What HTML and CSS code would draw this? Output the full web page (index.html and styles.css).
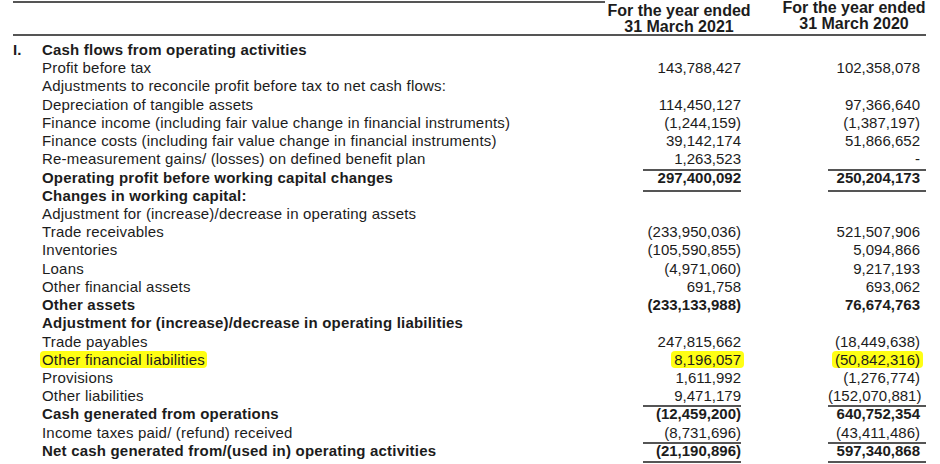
FILE: index.html
```html
<!DOCTYPE html>
<html>
<head>
<meta charset="utf-8">
<link rel="stylesheet" href="styles.css">
</head>
<body>
<div class="page">
  <div class="rule-top"></div>
  <div class="head">
    <div></div>
    <div class="hcell h1">For the year ended<br>31 March 2021</div>
    <div></div>
    <div class="hcell h2">For the year ended<br>31 March 2020</div>
  </div>
  <div class="rows">
    <div class="row b"><span class="no">I.</span><span class="lbl">Cash flows from operating activities</span><span class="n1"></span><span></span><span class="n2"></span></div>
    <div class="row"><span class="no"></span><span class="lbl">Profit before tax</span><span class="n1">143,788,427</span><span></span><span class="n2">102,358,078</span></div>
    <div class="row"><span class="no"></span><span class="lbl">Adjustments to reconcile profit before tax to net cash flows:</span><span class="n1"></span><span></span><span class="n2"></span></div>
    <div class="row"><span class="no"></span><span class="lbl">Depreciation of tangible assets</span><span class="n1">114,450,127</span><span></span><span class="n2">97,366,640</span></div>
    <div class="row"><span class="no"></span><span class="lbl">Finance income (including fair value change in financial instruments)</span><span class="n1">(1,244,159)</span><span></span><span class="n2">(1,387,197)</span></div>
    <div class="row"><span class="no"></span><span class="lbl">Finance costs (including fair value change in financial instruments)</span><span class="n1">39,142,174</span><span></span><span class="n2">51,866,652</span></div>
    <div class="row"><span class="no"></span><span class="lbl">Re-measurement gains/ (losses) on defined benefit plan</span><span class="n1">1,263,523</span><span></span><span class="n2">-</span></div>
    <div class="row b"><span class="no"></span><span class="lbl">Operating profit before working capital changes</span><span class="n1 over under4">297,400,092</span><span></span><span class="n2 over under4">250,204,173</span></div>
    <div class="row b"><span class="no"></span><span class="lbl">Changes in working capital:</span><span class="n1"></span><span></span><span class="n2"></span></div>
    <div class="row"><span class="no"></span><span class="lbl">Adjustment for (increase)/decrease in operating assets</span><span class="n1"></span><span></span><span class="n2"></span></div>
    <div class="row"><span class="no"></span><span class="lbl">Trade receivables</span><span class="n1">(233,950,036)</span><span></span><span class="n2">521,507,906</span></div>
    <div class="row"><span class="no"></span><span class="lbl">Inventories</span><span class="n1">(105,590,855)</span><span></span><span class="n2">5,094,866</span></div>
    <div class="row"><span class="no"></span><span class="lbl">Loans</span><span class="n1">(4,971,060)</span><span></span><span class="n2">9,217,193</span></div>
    <div class="row"><span class="no"></span><span class="lbl">Other financial assets</span><span class="n1">691,758</span><span></span><span class="n2">693,062</span></div>
    <div class="row b"><span class="no"></span><span class="lbl">Other assets</span><span class="n1">(233,133,988)</span><span></span><span class="n2">76,674,763</span></div>
    <div class="row b"><span class="no"></span><span class="lbl">Adjustment for (increase)/decrease in operating liabilities</span><span class="n1"></span><span></span><span class="n2"></span></div>
    <div class="row"><span class="no"></span><span class="lbl">Trade payables</span><span class="n1">247,815,662</span><span></span><span class="n2">(18,449,638)</span></div>
    <div class="row"><span class="no"></span><span class="lbl"><mark class="hl">Other financial liabilities</mark></span><span class="n1"><mark class="hl hn">8,196,057</mark></span><span></span><span class="n2"><mark class="hl hn">(50,842,316)</mark></span></div>
    <div class="row"><span class="no"></span><span class="lbl">Provisions</span><span class="n1">1,611,992</span><span></span><span class="n2">(1,276,774)</span></div>
    <div class="row"><span class="no"></span><span class="lbl">Other liabilities</span><span class="n1">9,471,179</span><span></span><span class="n2">(152,070,881)</span></div>
    <div class="row b"><span class="no"></span><span class="lbl">Cash generated from operations</span><span class="n1 over">(12,459,200)</span><span></span><span class="n2 over">640,752,354</span></div>
    <div class="row"><span class="no"></span><span class="lbl">Income taxes paid/ (refund) received</span><span class="n1">(8,731,696)</span><span></span><span class="n2">(43,411,486)</span></div>
    <div class="row b"><span class="no"></span><span class="lbl">Net cash generated from/(used in) operating activities</span><span class="n1 over under2">(21,190,896)</span><span></span><span class="n2 over under2">597,340,868</span></div>
    <div class="row b next"><span class="no">II.</span><span class="lbl">Cash flows from investing activities</span><span class="n1"></span><span></span><span class="n2"></span></div>
  </div>
</div>
</body>
</html>
```

FILE: styles.css
```css
html, body {
  margin: 0;
  padding: 0;
  background: #ffffff;
}
body {
  font-family: "Liberation Sans", Arial, sans-serif;
  font-size: 15px;
  color: #1c1c1c;
  overflow: hidden;
}
.page {
  padding: 1px 0 0 13px;
}
.rule-top {
  width: 592px;
  border-top: 2px solid #555;
}
.head {
  width: 913px;
  height: 34px;
  margin-top: -3px;
  border-bottom: 2px solid #555;
  display: grid;
  grid-template-columns: 586px 160px 23px 144px;
}
.hcell {
  font-weight: bold;
  font-size: 16px;
  line-height: 16px;
  text-align: center;
  white-space: nowrap;
}
.h1 {
  padding-top: 3px;
}
.h2 {
  padding-top: 0px;
}
.rows {
  width: 913px;
  margin-top: 5px;
}
.row {
  display: grid;
  grid-template-columns: 29px 601px 98px 87px 98px;
  grid-template-rows: 18.23px;
  line-height: 18.23px;
  white-space: nowrap;
}
.next {
  margin-top: 1px;
}
.lbl {
  letter-spacing: 0.2px;
}
.b {
  font-weight: bold;
}
.n1, .n2 {
  text-align: right;
}
.n2 {
  padding-right: 6px;
}
.over {
  box-shadow: inset 0 2px 0 #555;
}
.under4 {
  margin-bottom: -5px;
  border-bottom: 2px solid #555;
}
.under2 {
  margin-bottom: -3px;
  border-bottom: 2px solid #555;
}
.hl {
  background: #ffff14;
  color: inherit;
  border-radius: 4px;
  padding: 0 2px;
  margin: 0 -2px;
}
.hn {
  padding: 0 3px;
  margin: 0 -3px;
}
```
